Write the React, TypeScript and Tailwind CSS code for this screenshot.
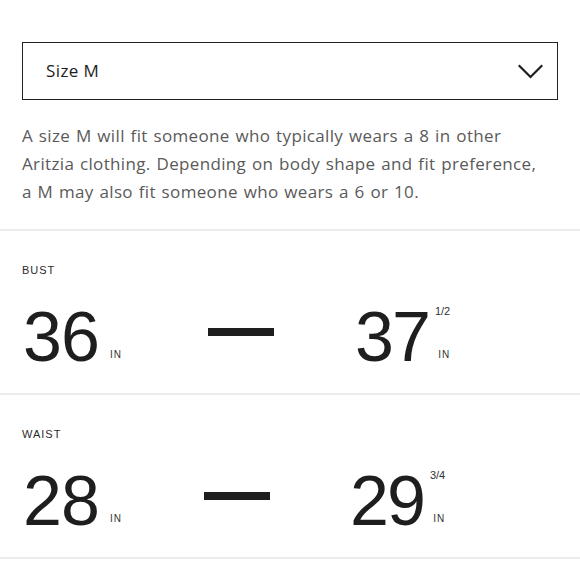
import React from "react";

type Row = {
  label: string;
  from: string;
  to: string;
  frac: string;
  dashLeft: number;
  rightGap: number;
};

const rows: Row[] = [
  { label: "BUST", from: "36", to: "37", frac: "1/2", dashLeft: 186, rightGap: 81 },
  { label: "WAIST", from: "28", to: "29", frac: "3/4", dashLeft: 182, rightGap: 80 },
];

function Measure({ row }: { row: Row }) {
  return (
    <div className="border-b-2 border-[#ececec] px-[22px] pt-[31px] pb-[21px]">
      <div className="text-[11px] leading-[16px] tracking-[1px] text-[#2b2b2b]">{row.label}</div>
      <div className="mt-[24px] flex items-start">
        <div className="flex items-end" style={{ width: row.dashLeft }}>
          <span className="ml-[1px] text-[70px] leading-[70px] text-[#1e1e1e] tracking-[-1px]">{row.from}</span>
          <span className="ml-[11px] mb-[12px] text-[10px] leading-[10px] tracking-[1px] text-[#333]">IN</span>
        </div>
        <div className="mt-[26px] h-[8px] w-[66px] bg-[#1e1e1e]" />
        <div className="flex items-start" style={{ marginLeft: row.rightGap }}>
          <span className="text-[70px] leading-[70px] text-[#1e1e1e] tracking-[-2px]">{row.to}</span>
          <div className="ml-[6px] flex h-[70px] flex-col items-end">
            <span className="mt-[4px] text-[11px] leading-[11px] text-[#333]">{row.frac}</span>
            <span className="mt-auto mb-[12px] text-[10px] leading-[10px] tracking-[1px] text-[#333]">IN</span>
          </div>
        </div>
      </div>
    </div>
  );
}

export default function App() {
  return (
    <div className="min-h-[580px] w-[580px] bg-white font-['Liberation_Sans',Arial,sans-serif]">
      <div className="px-[22px] pt-[42px] pb-[23px]">
        <div className="flex h-[58px] items-center justify-between border-[1.5px] border-[#222] pl-[23px] pr-[14px]">
          <span className="font-['Open_Sans',sans-serif] text-[17px] tracking-[0.4px] text-[#1e1e1e]">Size M</span>
          <svg width="25" height="15" viewBox="0 0 25 15" fill="none">
            <polyline points="1.5,2 12.5,13 23.5,2" stroke="#1e1e1e" strokeWidth="2.2" strokeLinecap="square" />
          </svg>
        </div>
        <p className="mt-[22px] pr-[12px] font-['Open_Sans',sans-serif] text-[17px] leading-[28px] tracking-[0.35px] [word-spacing:1px] text-[#5a5a5a]">
          A size M will fit someone who typically wears a 8 in other Aritzia clothing. Depending on body shape and fit preference, a M may also fit someone who wears a 6 or 10.
        </p>
      </div>
      <div className="border-t-2 border-[#ececec]">
        {rows.map((r) => (
          <Measure key={r.label} row={r} />
        ))}
      </div>
    </div>
  );
}
